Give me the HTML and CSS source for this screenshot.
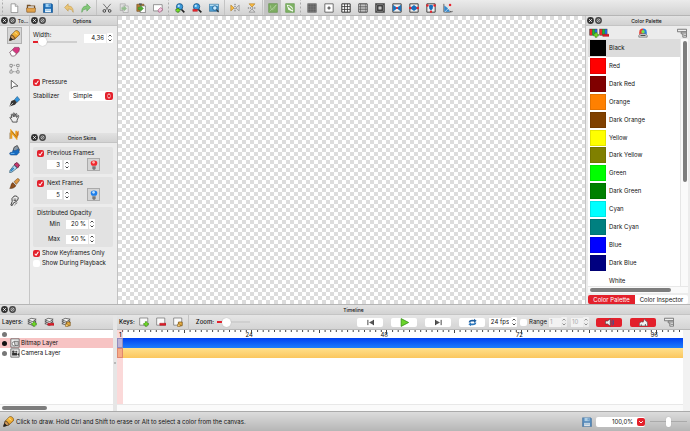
FILE: index.html
```html
<!DOCTYPE html>
<html lang="en">
<head>
<meta charset="utf-8">
<title>Animation editor</title>
<link rel="stylesheet" href="styles.css">
</head>
<body>
<svg class="defs" aria-hidden="true">
  <defs>
    <linearGradient id="g-pencil" x1="0" y1="0" x2="1" y2="1"><stop offset="0" stop-color="#ffd257"/><stop offset="1" stop-color="#e08a10"/></linearGradient>
    <symbol id="i-close" viewBox="0 0 8 8"><circle cx="4" cy="4" r="3.9" fill="#333"/><path d="M2.500 2.500l3 3M5.500 2.500l-3 3" stroke="#fff" stroke-width="1"/></symbol>
    <symbol id="i-float" viewBox="0 0 8 8"><circle cx="4" cy="4" r="3.9" fill="#444"/><circle cx="4" cy="4" r="1.800" fill="none" stroke="#ddd" stroke-width=".8"/><path d="M2.500 5.500l3-3" stroke="#ddd" stroke-width=".8"/></symbol>
    <symbol id="i-new" viewBox="0 0 12 12"><path d="M2.500 1h5l3 3v7.500h-8z" fill="#fff" stroke="#777" stroke-width=".8"/><path d="M7.500 1v3h3" fill="#ddd" stroke="#777" stroke-width=".7"/></symbol>
    <symbol id="i-open" viewBox="0 0 12 12"><path d="M1 2h4l1 1h5v8H1z" fill="#765128"/><path d="M2.500 4h7v3h-7z" fill="#eee"/><path d="M.5 6h11L11 11H1z" fill="#e3a44b" stroke="#765128" stroke-width=".6"/></symbol>
    <symbol id="i-save" viewBox="0 0 12 12"><path d="M.5 1h10l1 1v9.500H.5z" fill="#1769b4" stroke="#0d4c88" stroke-width=".7"/><path d="M3 1h6v4H3z" fill="#9fd0f3"/><path d="M6.800 1.500h1.200v2.700H6.800z" fill="#1769b4"/><path d="M2.500 7h7v4h-7z" fill="#eef5fb"/><path d="M3 8.500h6" stroke="#57a3dc"/></symbol>
    <symbol id="i-undo" viewBox="0 0 12 12"><path d="M.7 5.300L5 1v2.600c4 0 6.300 2.200 6 7.600C10 8.300 8 7.200 5 7.200v2.600z" fill="#e9c577" stroke="#bd913f" stroke-width=".6"/></symbol>
    <symbol id="i-redo" viewBox="0 0 12 12"><path d="M11.300 5.300L7 1v2.600C3 3.600.7 5.800 1 11.200 2 8.300 4 7.200 7 7.200v2.600z" fill="#84c779" stroke="#4b9b48" stroke-width=".6"/></symbol>
    <symbol id="i-cut" viewBox="0 0 12 12"><path d="M1.500 1l6.300 7.500M10.500 1L4.200 8.500" stroke="#777" stroke-width="1.200"/><circle cx="2.800" cy="9.500" r="1.600" fill="none" stroke="#444" stroke-width="1.200"/><circle cx="9.200" cy="9.500" r="1.600" fill="none" stroke="#444" stroke-width="1.200"/></symbol>
    <symbol id="i-copy" viewBox="0 0 12 12"><g opacity=".65"><path d="M1.500 1h6v8h-6z" fill="#ddd" stroke="#777" stroke-width=".7"/><path d="M5 3.500h6V11.500H5z" fill="#eee" stroke="#777" stroke-width=".7"/><path d="M3 5h3V3l3.500 3.500L6 10V8H3z" fill="#71ad68"/></g></symbol>
    <symbol id="i-paste" viewBox="0 0 12 12"><path d="M1 1.500h8.500V10H1z" fill="#b78036" stroke="#6c4618" stroke-width=".7"/><path d="M3.500.5h3.500v2H3.500z" fill="#555"/><path d="M5 3.500h6.300v8H5z" fill="#fff" stroke="#555" stroke-width=".7"/><path d="M2.500 5h3V3L9 6.500 5.500 10V8h-3z" fill="#4eab32" stroke="#2a701d" stroke-width=".4"/></symbol>
    <symbol id="i-clear" viewBox="0 0 12 12"><path d="M.5 2h10.500v7.500H.5z" fill="#fff" stroke="#666" stroke-width=".8"/><path d="M6 8.500l3-3 2.700 2-3 3.500H7z" fill="#eec6dc" stroke="#a44373" stroke-width=".7"/></symbol>
    <symbol id="i-lens" viewBox="0 0 12 12"><path d="M7.500 7.500l3.700 3.700" stroke="#222" stroke-width="2"/><circle cx="5.500" cy="4.500" r="3.800" fill="#3c9bdc" stroke="#164c7c" stroke-width=".9"/><circle cx="4.500" cy="3.500" r="1.300" fill="#bce6ff"/></symbol>
    <symbol id="i-zin" viewBox="0 0 12 12"><use href="#i-lens"/><path d="M3.500 6v5.500M.7 8.700h5.600" stroke="#27650f" stroke-width="2.800"/><path d="M3.500 6.500v4.500M1.200 8.700h4.600" stroke="#74dc2b" stroke-width="1.600"/></symbol>
    <symbol id="i-zout" viewBox="0 0 12 12"><use href="#i-lens"/><path d="M1 7.500h5.500V10H1z" fill="#ed252d" stroke="#a50f18" stroke-width=".5"/></symbol>
    <symbol id="i-zfit" viewBox="0 0 12 12"><path d="M.5 1.500h11v8.500H.5z" fill="#4e9fd3" stroke="#2d688f" stroke-width=".7"/><path d="M1 2h10v1.500H1z" fill="#bce1f5"/><circle cx="7" cy="6" r="2.700" fill="#c7eaff" stroke="#16588b"/><path d="M9 8l2.500 3" stroke="#333" stroke-width="1.500"/></symbol>
    <symbol id="i-fliph" viewBox="0 0 12 12"><path d="M6 1v10" stroke="#555" stroke-dasharray="1.500 1"/><path d="M1 2.500L4.800 6 1 9.500z" fill="#ffc247" stroke="#a87214" stroke-width=".7"/><path d="M11 2.500L7.200 6 11 9.500z" fill="#ddd" stroke="#777" stroke-width=".7"/></symbol>
    <symbol id="i-flipv" viewBox="0 0 12 12"><path d="M1 6h10" stroke="#555" stroke-dasharray="1.500 1"/><path d="M2.500 1h7L6 4.800z" fill="#ffc247" stroke="#a87214" stroke-width=".7"/><path d="M2.500 11h7L6 7.200z" fill="#ddd" stroke="#777" stroke-width=".7"/></symbol>
    <symbol id="i-green1" viewBox="0 0 12 12"><path d="M.8.8h10.400v10.400H.8z" fill="#7eae62" stroke="#65924d" stroke-width=".8"/><path d="M3 3c0 3 1 5 2.500 5S8 5 10 2.500M2 10l8-8" stroke="#bcd7ad" fill="none" stroke-width=".7"/></symbol>
    <symbol id="i-green2" viewBox="0 0 12 12"><path d="M.8.8h10.400v10.400H.8z" fill="#7fb364" stroke="#679951" stroke-width=".8"/><path d="M2 2l2 6 5.500 2.500c1-5-1-7.500-7.500-8.500z" fill="#f4f8f1"/><path d="M4 3.500l5 4.500" stroke="#7fb364" stroke-width="1.500"/></symbol>
    <symbol id="i-dots" viewBox="0 0 12 12"><path d="M.5.500h11v11H.5z" fill="#555"/><path d="M2 1v10M4 1v10M6 1v10M8 1v10M10 1v10M1 2h10M1 4h10M1 6h10M1 8h10M1 10h10" stroke="#999" stroke-width=".4"/></symbol>
    <symbol id="i-plus" viewBox="0 0 12 12"><path d="M1 1h10v10H1z" fill="#fff" stroke="#555" stroke-width="1"/><path d="M6 4v4M4 6h4" stroke="#222" stroke-width="1"/></symbol>
    <symbol id="i-thirds" viewBox="0 0 12 12"><path d="M1 1h10v10H1z" fill="#fff" stroke="#333" stroke-width="1.200"/><path d="M4.300 1v10M7.700 1v10M1 4.300h10M1 7.700h10" stroke="#333" stroke-width="1"/></symbol>
    <symbol id="i-golden" viewBox="0 0 12 12"><path d="M1 1h10v10H1z" fill="#fff" stroke="#444" stroke-width="1.200"/><path d="M4.800 1v10M7.200 1v10M3 1v10M9.200 1v10M1 4.500h10M1 7.500h10" stroke="#444" stroke-width=".8"/></symbol>
    <symbol id="i-safe" viewBox="0 0 12 12"><path d="M1 1h10v10H1z" fill="#999" stroke="#444" stroke-width="1.500"/><path d="M3 3h6v6H3z" fill="#888" stroke="#333"/><path d="M5 5h2v2H5z" fill="#fff"/><path d="M1 1l4 4M11 1L7 5M1 11l4-4M11 11L7 7" stroke="#444" stroke-width=".7"/></symbol>
    <symbol id="i-p1" viewBox="0 0 12 12"><path d="M1 1h10v10H1z" fill="#eee" stroke="#444" stroke-width="1.200"/><path d="M1.500 3L6 6 1.500 9.500zM10.500 3L6 6l4.500 3.500z" fill="#156dbd" stroke="#156dbd"/><circle cx="6" cy="6" r="1.300" fill="#e6242e"/></symbol>
    <symbol id="i-p2" viewBox="0 0 12 12"><path d="M1 1h10v10H1z" fill="#eee" stroke="#444" stroke-width="1.200"/><path d="M1 6l5-3.500L11 6 6 9.500z" fill="#156dbd"/><circle cx="1.500" cy="6" r="1.500" fill="#e6242e"/><circle cx="10.500" cy="6" r="1.500" fill="#e6242e"/></symbol>
    <symbol id="i-p3" viewBox="0 0 12 12"><path d="M1 1h10v10H1z" fill="#eee" stroke="#444" stroke-width="1.200"/><path d="M3.500 3L6 2l2.500 1L8 7 6 9 4 7z" fill="#156dbd"/><circle cx="1.700" cy="3" r="1.500" fill="#e6242e"/><circle cx="10.300" cy="3" r="1.500" fill="#e6242e"/><circle cx="6" cy="10.500" r="1.400" fill="#e6242e"/></symbol>
    <symbol id="i-p4" viewBox="0 0 12 12"><path d="M1 1v10h8" fill="none" stroke="#555"/><path d="M1.500 3l4 3 3 4.500h-7z" fill="#3388cd"/><path d="M2 11l7-7" stroke="#fff" stroke-width=".7"/><circle cx="8.500" cy="2.500" r="1.500" fill="#e6242e"/><path d="M8.500 9.500l1.500 1.500 1.500-1.500" fill="none" stroke="#222" stroke-width=".9"/></symbol>
    <symbol id="i-pencil" viewBox="0 0 12 12"><path d="M.8 11.200L2.400 5.500 7 .8c2.300-1.200 5.500 2 4.400 4.400L6.500 9.700z" fill="url(#g-pencil)" stroke="#5c3d13" stroke-width=".6"/><path d="M.8 11.200L2.400 5.500 4.500 6l.2 1.500 1.600.4.200 1.800z" fill="#d69d5d" stroke="#3b2b19" stroke-width=".7"/><path d="M.3 11.700L1.700 7.500l3 3z" fill="#242424"/><path d="M6.500 2.500L9 5" stroke="#fff0a4" stroke-width="1"/></symbol>
    <symbol id="i-eraser" viewBox="0 0 12 12"><path d="M1 7L6 1.500h4.800l.7 1.500-.7 3L6 10.800H2.800z" fill="#d6357f" stroke="#742048" stroke-width=".6"/><path d="M1 7L3.500 4.300 8 8.500 6 10.800H2.800z" fill="#fff" stroke="#666" stroke-width=".6"/></symbol>
    <symbol id="i-select" viewBox="0 0 12 12"><path d="M2.500 2.500h7v7h-7z" fill="none" stroke="#888" stroke-dasharray="1.500 1"/><g fill="#fff" stroke="#777" stroke-width=".8"><path d="M1 1.500h2.500V4H1zM8.500 1.500H11V4H8.500zM1 8.500h2.500V11H1zM8.500 8.500H11V11H8.500z"/></g></symbol>
    <symbol id="i-move" viewBox="0 0 12 12"><path d="M2.500 1.500v9l2.800-2.400 4.500-.4z" fill="#fff" stroke="#444" stroke-width=".9"/></symbol>
    <symbol id="i-pen" viewBox="0 0 12 12"><path d="M6 4l3-3.500L11.800 4 8.500 7z" fill="#3595db" stroke="#155282" stroke-width=".6"/><path d="M.5 11.500l2-6L6 4l2.500 3L6.500 9.500z" fill="#343434"/><path d="M1 11l3.500-3.500" stroke="#ddd" stroke-width=".8"/></symbol>
    <symbol id="i-hand" viewBox="0 0 12 12"><path d="M3 9L.9 6.200c.3-1 1.300-.6 2.100.2L2.500 2.700c.4-.9 1.300-.6 1.500.2l.8 2.300-.2-3.800c.5-.8 1.400-.5 1.500.3l.3 3.500.9-3.200c.5-.7 1.300-.4 1.300.4l-.3 3.500 1.400-2c.7-.4 1.200.2.900.9L8.800 9v2H3.800z" fill="#eee" stroke="#3c3c3c" stroke-width=".9"/></symbol>
    <symbol id="i-poly" viewBox="0 0 12 12"><path d="M2.500 10.500v-8l5.500 7V2" fill="none" stroke="#ed9f1b" stroke-width="2.200"/><path d="M3 2.500l6 7M1 11V4" stroke="#734b12" stroke-width=".6"/><path d="M8.500 9.500V4l2-2.500v5z" fill="#cf741a"/></symbol>
    <symbol id="i-bucket" viewBox="0 0 12 12"><path d="M5.500 2.500L9 .5l2.500 5L8 9 4.500 6z" fill="#8d99a5" stroke="#333" stroke-width=".8"/><path d="M4.500 5.500c2 1.500 4.500 0 5.500-1.500l1.300 4L8.500 11H2C-.2 10 .3 7.500 3.500 8z" fill="#176bc0" stroke="#114580" stroke-width=".5"/><path d="M2 9.300h4" stroke="#63b2f2"/></symbol>
    <symbol id="i-drop" viewBox="0 0 12 12"><path d="M5.500 2.800L8.500.5l3 2.800L9.500 6.500z" fill="#c7376d" stroke="#69213e" stroke-width="1"/><path d="M5.500 3.500l3.200 3.100L3.200 11 .7 11.500 1.200 9z" fill="#b9dcf2" stroke="#26526c" stroke-width=".8"/><path d="M2 9.800l3.200-3.200" stroke="#297fc1" stroke-width="1.700"/></symbol>
    <symbol id="i-brush" viewBox="0 0 12 12"><path d="M5.500 4l3.500-3.200c1-.8 3 1 2.200 2.200L8 7z" fill="#de9842" stroke="#674115" stroke-width=".6"/><path d="M5 4.500l3 3-1 1-3-3z" fill="#ccc"/><path d="M4 5l3.500 3.500C6 11 3 11.700.8 11.300 2.500 10 1.500 7 4 5z" fill="#90501e" stroke="#4f2a0c" stroke-width=".6"/></symbol>
    <symbol id="i-smudge" viewBox="0 0 12 12"><path d="M5.500 1.200C8 .5 10.500 2 10 4.300L8.200 7 5 8.500 3.500 11.500 2 11l1.500-4-.3-3z" fill="#eee" stroke="#333" stroke-width="1"/><path d="M5 4.500h3M5 6h3M7 9.500l2-1M6 11l1-.5" stroke="#333" stroke-width=".8"/></symbol>
    <symbol id="i-bulb-r" viewBox="0 0 12 12"><path d="M6 .5c5 0 4.600 4 2.500 6.500h-5C1.400 4.500 1 .5 6 .5z" fill="#f1282d"/><circle cx="5.500" cy="2.800" r="1.600" fill="#ffb5ae"/><path d="M4 7.500h4v3L7 11.800H5l-1-1.300z" fill="#777"/></symbol>
    <symbol id="i-bulb-b" viewBox="0 0 12 12"><path d="M6 .5c5 0 4.600 4 2.500 6.500h-5C1.400 4.500 1 .5 6 .5z" fill="#1d7eea"/><circle cx="5.500" cy="2.800" r="1.600" fill="#bde1ff"/><path d="M4 7.500h4v3L7 11.800H5l-1-1.300z" fill="#777"/></symbol>
    <symbol id="i-rgb" viewBox="0 0 12 12"><path d="M.5 1h9.500v8H.5z" fill="#333"/><path d="M1 1.500h3v7H1z" fill="#e82828"/><path d="M4 1.500h3v7H4z" fill="#21b530"/><path d="M7 1.500h2.600v7H7z" fill="#2465dc"/></symbol>
    <symbol id="i-add" viewBox="0 0 12 12"><path d="M8.500 5.500v6M5.500 8.500h6" stroke="#27650f" stroke-width="2.800"/><path d="M8.500 5.800v5.400M5.800 8.500h5.400" stroke="#74dc2b" stroke-width="1.800"/></symbol>
    <symbol id="i-del" viewBox="0 0 12 12"><path d="M4.500 7.500H12V10H4.500z" fill="#e21e29" stroke="#9b0d15" stroke-width=".5"/></symbol>
    <symbol id="i-dup" viewBox="0 0 12 12"><path d="M6.500 6H11v4.500H6.500z" fill="#f0b545" stroke="#765014" stroke-width=".9"/><path d="M5.500 8.500h3v3h-3z" fill="#ffd376" stroke="#765014" stroke-width=".6"/></symbol>
    <symbol id="i-wheel" viewBox="0 0 12 12"><path d="M6 .5A4.500 4.500 0 0 0 1.500 5v3H6z" fill="#e83b31"/><path d="M6 .5A4.500 4.500 0 0 1 10.500 5v3H6z" fill="#287ede"/><circle cx="6" cy="4.500" r="2" fill="#7be34a"/><path d="M1 9l2-2h6l2 2v2H1z" fill="#d9d9d9" stroke="#555" stroke-width=".7"/><path d="M3 9h6" stroke="#333"/></symbol>
    <symbol id="i-menu" viewBox="0 0 12 12"><path d="M.5 1.500h11v3H.5z" fill="#eee" stroke="#666" stroke-width="1"/><path d="M5 5h6.500v6H7V7H5z" fill="#eee" stroke="#666" stroke-width="1"/><path d="M7 7h4M8 9h3" stroke="#666" stroke-width=".8"/></symbol>
    <symbol id="i-layers" viewBox="0 0 12 12"><g fill="#f5f5f5" stroke="#333" stroke-width=".8"><path d="M1 8l4-2 6 1-4 3z"/><path d="M1 5.800l4-2 6 1-4 3z"/><path d="M1 3.600l4-2 6 1-4 3z"/></g></symbol>
    <symbol id="i-frame" viewBox="0 0 12 12"><path d="M.8 1.200h9.700v8.600H.8z" fill="#fafafa" stroke="#666" stroke-width=".8"/></symbol>
    <symbol id="i-bitmap" viewBox="0 0 12 12"><path d="M1 1h10v10H1z" fill="#eee" stroke="#555" stroke-width=".9"/><circle cx="5" cy="7" r="2.500" fill="#fff" stroke="#555" stroke-width=".8"/><path d="M5 4h5v5H6z" fill="#ccc" stroke="#555" stroke-width=".8"/></symbol>
    <symbol id="i-camera" viewBox="0 0 12 12"><path d="M1 1h10v10H1z" fill="#eee" stroke="#555" stroke-width=".9"/><circle cx="4" cy="4.500" r="1.600" fill="#444"/><circle cx="7.500" cy="4.500" r="1.300" fill="#555"/><path d="M2.500 6h6v3h-6zM8.500 7.500L11 6v3.500z" fill="#333"/></symbol>
    <symbol id="i-first" viewBox="0 0 12 12"><path d="M2.500 2.500v7M10 2.500v7" stroke="#333" stroke-width="1.200"/><path d="M9.500 3L4 6l5.500 3z" fill="#555"/></symbol>
    <symbol id="i-last" viewBox="0 0 12 12"><path d="M9.500 2.500v7M2 2.500v7" stroke="#333" stroke-width="1.200"/><path d="M2.500 3L8 6 2.500 9z" fill="#555"/></symbol>
    <symbol id="i-play" viewBox="0 0 12 12"><path d="M1.500.8L11.500 6l-10 5.200z" fill="#6ad42b" stroke="#2f8b13" stroke-width="1"/></symbol>
    <symbol id="i-loop" viewBox="0 0 12 12"><path d="M1 6c0-3 2-4 7-3.500V1l3.500 2.800L8 6.500V4.800C5 4.500 3 4.500 3 6z" fill="#1c5d9f"/><path d="M11 6c0 3-2 4-7 3.500V11L.5 8.200 4 5.500v1.700c3 .3 5 .3 5-1.200z" fill="#2b77bd"/></symbol>
    <symbol id="i-sound" viewBox="0 0 12 12"><path d="M.5 4h3L7 1v10L3.500 8h-3z" fill="#eee" stroke="#333" stroke-width=".8"/><path d="M8.500 3.500c1.500 1.500 1.500 3.500 0 5M10 2c2.200 2.500 2.200 5.500 0 8" fill="none" stroke="#275b9a" stroke-width="1.200"/></symbol>
    <symbol id="i-scrub" viewBox="0 0 12 12"><path d="M.5 10.500V6.500L3.500 5l2 .5L7.500 1l1.500 3 2 1 .5 5.500z" fill="#f2f2f2" stroke="#555" stroke-width=".8"/><path d="M3 10.500V8.500M8.500 10.500V8" stroke="#333"/></symbol>
    <symbol id="i-step" viewBox="0 0 6 10"><path d="M1 0h4q1 0 1 1v8q0 1-1 1H1q-1 0-1-1V1q0-1 1-1z" fill="#fff"/><path d="M1.500 3.500L3 2l1.500 1.500M1.500 6.500L3 8l1.500-1.500" fill="none" stroke="#333" stroke-width=".9"/></symbol>
    <symbol id="i-updown" viewBox="0 0 8 8"><rect width="8" height="8" rx="2" fill="#e3202b"/><path d="M2.300 3.300L4 1.700l1.700 1.600M2.300 4.700L4 6.300l1.700-1.600" fill="none" stroke="#fff" stroke-width=".9"/></symbol>
    <symbol id="i-down" viewBox="0 0 8 8"><rect width="8" height="8" rx="2" fill="#e3202b"/><path d="M2.200 3.200L4 5l1.800-1.800" fill="none" stroke="#fff" stroke-width="1"/></symbol>
    <pattern id="ruler-ticks" width="135" height="8" patternUnits="userSpaceOnUse">
      <path d="M5.600 0v2M11.200 0v2M16.800 0v2M22.500 0v2M28.100 0v2M33.700 0v2M39.300 0v2M45 0v2M50.600 0v2M56.200 0v2M61.800 0v2M67.500 0v3M73.100 0v2M78.700 0v2M84.300 0v2M90 0v2M95.600 0v2M101.200 0v2M106.800 0v2M112.500 0v2M118.100 0v2M123.700 0v2M129.300 0v2M134.500 0v4" stroke="#444" stroke-width="1"/>
    </pattern>
  </defs>
</svg>

<header class="toolbar">
  <span class="grip"></span>
  <button class="tb" aria-label="New"><svg><use href="#i-new"/></svg></button>
  <button class="tb" aria-label="Open"><svg><use href="#i-open"/></svg></button>
  <button class="tb" aria-label="Save"><svg><use href="#i-save"/></svg></button>
  <span class="sep"></span>
  <button class="tb" aria-label="Undo"><svg><use href="#i-undo"/></svg></button>
  <button class="tb" aria-label="Redo"><svg><use href="#i-redo"/></svg></button>
  <span class="sep"></span>
  <button class="tb" aria-label="Cut"><svg><use href="#i-cut"/></svg></button>
  <button class="tb" aria-label="Copy"><svg><use href="#i-copy"/></svg></button>
  <button class="tb" aria-label="Paste"><svg><use href="#i-paste"/></svg></button>
  <button class="tb" aria-label="Clear frame"><svg><use href="#i-clear"/></svg></button>
  <span class="grip"></span>
  <button class="tb" aria-label="Zoom in"><svg><use href="#i-zin"/></svg></button>
  <button class="tb" aria-label="Zoom out"><svg><use href="#i-zout"/></svg></button>
  <button class="tb" aria-label="Reset view"><svg><use href="#i-zfit"/></svg></button>
  <span class="sep"></span>
  <button class="tb" aria-label="Flip horizontally"><svg><use href="#i-fliph"/></svg></button>
  <button class="tb" aria-label="Flip vertically"><svg><use href="#i-flipv"/></svg></button>
  <span class="sep"></span>
  <button class="tb on" aria-label="Thin lines"><svg><use href="#i-green1"/></svg></button>
  <button class="tb" aria-label="Outlines"><svg><use href="#i-green2"/></svg></button>
  <span class="grip"></span>
  <button class="tb" aria-label="Grid"><svg><use href="#i-dots"/></svg></button>
  <button class="tb" aria-label="Center"><svg><use href="#i-plus"/></svg></button>
  <button class="tb" aria-label="Thirds"><svg><use href="#i-thirds"/></svg></button>
  <button class="tb" aria-label="Golden ratio"><svg><use href="#i-golden"/></svg></button>
  <button class="tb" aria-label="Safe areas"><svg><use href="#i-safe"/></svg></button>
  <button class="tb" aria-label="One point perspective"><svg><use href="#i-p1"/></svg></button>
  <button class="tb" aria-label="Two point perspective"><svg><use href="#i-p2"/></svg></button>
  <button class="tb" aria-label="Three point perspective"><svg><use href="#i-p3"/></svg></button>
  <button class="tb" aria-label="Perspective angle"><svg><use href="#i-p4"/></svg></button>
</header>

<main class="workspace">
  <section class="dock tools">
    <div class="title"><button aria-label="Close"><svg><use href="#i-close"/></svg></button><button aria-label="Float"><svg><use href="#i-float"/></svg></button><h2>To...</h2></div>
    <nav class="tool-list">
      <button class="on" aria-label="Pencil"><svg><use href="#i-pencil"/></svg></button>
      <button aria-label="Eraser"><svg><use href="#i-eraser"/></svg></button>
      <button aria-label="Select"><svg><use href="#i-select"/></svg></button>
      <button aria-label="Move"><svg><use href="#i-move"/></svg></button>
      <button aria-label="Pen"><svg><use href="#i-pen"/></svg></button>
      <button aria-label="Hand"><svg><use href="#i-hand"/></svg></button>
      <button aria-label="Polyline"><svg><use href="#i-poly"/></svg></button>
      <button aria-label="Bucket"><svg><use href="#i-bucket"/></svg></button>
      <button aria-label="Eyedropper"><svg><use href="#i-drop"/></svg></button>
      <button aria-label="Brush"><svg><use href="#i-brush"/></svg></button>
      <button aria-label="Smudge"><svg><use href="#i-smudge"/></svg></button>
    </nav>
  </section>

  <div class="side">
    <section class="dock options">
      <div class="title"><button aria-label="Close"><svg><use href="#i-close"/></svg></button><button aria-label="Float"><svg><use href="#i-float"/></svg></button><h2>Options</h2></div>
      <div class="options-body">
        <div class="width-row">
          <div class="width-slider"><label for="width">Width:</label><input class="slider" id="width" type="range" min="0" max="100" value="14"></div>
          <input class="field wide" type="text" value="4,36" aria-label="Width value"><svg class="step"><use href="#i-step"/></svg>
        </div>
        <label class="check"><input type="checkbox" checked>Pressure</label>
        <div class="stab-row">
          <label for="stab">Stabilizer</label>
          <span class="select"><select id="stab"><option>Simple</option></select><svg><use href="#i-updown"/></svg></span>
        </div>
      </div>
    </section>
    <section class="dock onion">
      <div class="title"><button aria-label="Close"><svg><use href="#i-close"/></svg></button><button aria-label="Float"><svg><use href="#i-float"/></svg></button><h2>Onion Skins</h2></div>
      <div class="onion-body">
        <div class="group">
          <label class="check"><input type="checkbox" checked>Previous Frames</label>
          <div class="count"><input class="field" type="text" value="3" aria-label="Previous frame count"><svg class="step"><use href="#i-step"/></svg><button class="bulb" aria-label="Red tint"><svg><use href="#i-bulb-r"/></svg></button></div>
        </div>
        <div class="group">
          <label class="check"><input type="checkbox" checked>Next Frames</label>
          <div class="count"><input class="field" type="text" value="5" aria-label="Next frame count"><svg class="step"><use href="#i-step"/></svg><button class="bulb" aria-label="Blue tint"><svg><use href="#i-bulb-b"/></svg></button></div>
        </div>
        <div class="group opacity">
          <h3>Distributed Opacity</h3>
          <div class="opacity-row"><label for="min">Min</label><input class="field wide" id="min" type="text" value="20 %"><svg class="step"><use href="#i-step"/></svg></div>
          <div class="opacity-row"><label for="max">Max</label><input class="field wide" id="max" type="text" value="50 %"><svg class="step"><use href="#i-step"/></svg></div>
        </div>
        <label class="check"><input type="checkbox" checked>Show Keyframes Only</label>
        <label class="check"><input type="checkbox">Show During Playback</label>
      </div>
    </section>
  </div>

  <div class="canvas"></div>

  <section class="dock palette">
    <div class="title"><button aria-label="Close"><svg><use href="#i-close"/></svg></button><button aria-label="Float"><svg><use href="#i-float"/></svg></button><h2>Color Palette</h2></div>
    <div class="palette-tools">
      <button aria-label="Add color"><svg><use href="#i-rgb"/><use href="#i-add"/></svg></button>
      <button aria-label="Remove color"><svg><use href="#i-rgb"/><use href="#i-del"/></svg></button>
      <button class="wheel" aria-label="Color dialog"><svg><use href="#i-wheel"/></svg></button>
      <button aria-label="Palette menu"><svg><use href="#i-menu"/></svg></button>
    </div>
    <div class="swatches">
      <ul>
        <li class="selected"><i class="black"></i>Black</li>
        <li><i class="red"></i>Red</li>
        <li><i class="dark-red"></i>Dark Red</li>
        <li><i class="orange"></i>Orange</li>
        <li><i class="dark-orange"></i>Dark Orange</li>
        <li><i class="yellow"></i>Yellow</li>
        <li><i class="dark-yellow"></i>Dark Yellow</li>
        <li><i class="green"></i>Green</li>
        <li><i class="dark-green"></i>Dark Green</li>
        <li><i class="cyan"></i>Cyan</li>
        <li><i class="dark-cyan"></i>Dark Cyan</li>
        <li><i class="blue"></i>Blue</li>
        <li><i class="dark-blue"></i>Dark Blue</li>
        <li><i class="white"></i>White</li>
      </ul>
      <div class="vbar"><span></span></div>
      <div class="hbar"><span></span></div>
    </div>
    <div class="tabs"><button class="on">Color Palette</button><button>Color Inspector</button></div>
  </section>
</main>

<section class="dock timeline">
  <div class="title"><button aria-label="Close"><svg><use href="#i-close"/></svg></button><button aria-label="Float"><svg><use href="#i-float"/></svg></button><h2>Timeline</h2></div>
  <div class="timeline-body">
    <div class="layers">
      <div class="bar">
        <span class="bar-label">Layers:</span>
        <button class="tb" aria-label="Add layer"><svg><use href="#i-layers"/><use href="#i-add"/></svg></button>
        <button class="tb" aria-label="Remove layer"><svg><use href="#i-layers"/><use href="#i-del"/></svg></button>
        <button class="tb" aria-label="Duplicate layer"><svg><use href="#i-layers"/><use href="#i-dup"/></svg></button>
      </div>
      <div class="layer head"><i class="dot"></i></div>
      <div class="layer current"><i class="dot"></i><svg><use href="#i-bitmap"/></svg>Bitmap Layer</div>
      <div class="layer"><i class="dot"></i><svg><use href="#i-camera"/></svg>Camera Layer</div>
      <div class="hbar"><span></span></div>
    </div>
    <div class="splitter"><i></i></div>
    <div class="frames">
      <div class="bar">
        <span class="bar-label">Keys:</span>
        <button class="tb" aria-label="Add key"><svg><use href="#i-frame"/><use href="#i-add"/></svg></button>
        <button class="tb" aria-label="Remove key"><svg><use href="#i-frame"/><use href="#i-del"/></svg></button>
        <button class="tb" aria-label="Duplicate key"><svg><use href="#i-frame"/><use href="#i-dup"/></svg></button>
        <span class="sep"></span>
        <label class="bar-label zoom-label" for="tzoom">Zoom:</label>
        <input class="slider small" id="tzoom" type="range" min="0" max="100" value="22">
        <div class="transport">
          <button aria-label="First frame"><svg><use href="#i-first"/></svg></button>
          <button aria-label="Play"><svg><use href="#i-play"/></svg></button>
          <button aria-label="Last frame"><svg><use href="#i-last"/></svg></button>
          <button aria-label="Loop"><svg><use href="#i-loop"/></svg></button>
        </div>
        <input class="field wide" type="text" value="24 fps" aria-label="Frame rate"><svg class="step"><use href="#i-step"/></svg>
        <label class="check range"><input type="checkbox">Range</label>
        <input class="field mini" type="text" value="1" disabled aria-label="Range start"><svg class="step dim"><use href="#i-step"/></svg>
        <input class="field mini" type="text" value="10" disabled aria-label="Range end"><svg class="step dim"><use href="#i-step"/></svg>
        <div class="transport toggles">
          <button class="on" aria-label="Sound"><svg><use href="#i-sound"/></svg></button>
          <button class="on" aria-label="Sound scrub"><svg><use href="#i-scrub"/></svg></button>
        </div>
        <button class="tb" aria-label="Timeline menu"><svg><use href="#i-menu"/></svg></button>
      </div>
      <div class="tracks">
        <div class="ruler">
          <svg class="ticks"><rect width="100%" height="8" fill="url(#ruler-ticks)"/></svg>
          <b>1</b><span>24</span><span>48</span><span>72</span><span>96</span>
        </div>
        <div class="track bitmap"><i></i></div>
        <div class="track camera"><i></i></div>
        <div class="playhead"></div>
        <div class="hbar"></div>
      </div>
    </div>
  </div>
</section>

<footer class="status">
  <svg><use href="#i-pencil"/></svg>
  <p>Click to draw. Hold Ctrl and Shift to erase or Alt to select a color from the canvas.</p>
  <svg class="saved"><use href="#i-save"/></svg>
  <span class="select zoom"><select aria-label="Zoom level"><option>100,0%</option></select><svg><use href="#i-down"/></svg></span>
  <input class="slider plain" type="range" min="0" max="100" value="50" aria-label="Zoom">
</footer>
</body>
</html>
```
FILE: styles.css
```css
* { box-sizing: border-box; }
html, body { height: 100%; }
body {
  margin: 0;
  display: flex;
  flex-direction: column;
  overflow: hidden;
  background: #ececec;
  color: #111;
  font: 6px/10px Inter, "Liberation Sans", sans-serif;
}
button, input, select { font: inherit; color: inherit; margin: 0; padding: 0; border: 0; }
button { display: flex; align-items: center; justify-content: center; background: none; }
svg { display: block; width: 11px; height: 11px; flex: none; }
h2, h3, p, ul { margin: 0; padding: 0; font: inherit; }
label { white-space: nowrap; }
.defs { position: absolute; width: 0; height: 0; }

.toolbar {
  flex: none;
  display: flex;
  height: 16px;
  background: linear-gradient(#ebebeb, #d2d2d2);
  border-bottom: 1px solid #b5b5b5;
}
.tb { width: 17px; height: 15px; flex: none; }
.tb svg { width: 10px; height: 10px; }
.tb.on { background: #c3c3c3; }
.sep { width: 4px; flex: none; background: linear-gradient(#c4c4c4, #c4c4c4) center / 1px 100% no-repeat; }
.grip { width: 5px; flex: none; background: radial-gradient(circle, #aaa 1px, transparent 1px) center / 5px 4px repeat-y; }

.workspace { flex: 1; min-height: 0; display: flex; }
.title {
  flex: none;
  display: flex;
  align-items: center;
  gap: 1px;
  height: 10px;
  padding-left: 1px;
  background: linear-gradient(#e2e2e2, #d2d2d2);
  border-bottom: 1px solid #c4c4c4;
}
.title svg { width: 7px; height: 7px; }
.title h2 { flex: 1; text-align: center; font-size: 5px; font-weight: 500; }

.tools { width: 30px; display: flex; flex-direction: column; border-right: 1px solid #c6c6c6; }
.tool-list { height: 63%; margin-top: 1px; display: flex; flex-direction: column; align-items: center; }
.tool-list button { flex: 1; width: 15px; border: 1px solid transparent; }
.tool-list .on { background: #d6d6d6; border-color: #b0b0b0; }

.side { width: 88px; display: flex; flex-direction: column; border-right: 1px solid #c2c2c2; }
.options { height: 117px; }
.options-body { padding: 2px 4px 0 3px; }
.width-row { display: flex; align-items: center; gap: 1px; height: 20px; margin-bottom: 26px; }
.width-slider { flex: 1; padding-right: 6px; }
.width-slider label { display: block; height: 7px; }
.options .check { height: 16px; margin-bottom: 1px; }
.stab-row { display: flex; align-items: center; justify-content: space-between; }
.check { display: flex; align-items: center; gap: 2px; height: 10px; }
.check input {
  appearance: none;
  width: 7px;
  height: 7px;
  flex: none;
  border-radius: 2px;
  background: #fff;
}
.check input:checked {
  background: url("data:image/svg+xml,%3Csvg xmlns='http://www.w3.org/2000/svg' viewBox='0 0 8 8'%3E%3Cpath d='M2 4.300l1.500 1.700L6.200 2' fill='none' stroke='white' stroke-width='1.200'/%3E%3C/svg%3E") #e3202b;
}
.field { width: 15px; height: 9px; background: #fff; text-align: right; padding-right: 2px; min-width: 0; }
.field.wide { width: 22px; }
.field.mini { width: 12px; text-align: left; padding: 0 0 0 1px; }
.field:disabled { color: #aaa; background: #f2f2f2; }
.step { width: 6px; height: 10px; }
.step.dim { opacity: .5; }
.select { position: relative; display: block; width: 44px; height: 10px; }
.select select { appearance: none; width: 100%; height: 100%; background: #fff; border-radius: 2px; padding-left: 4px; }
.select svg { position: absolute; right: 0; top: 1px; width: 8px; height: 8px; pointer-events: none; }

.slider {
  appearance: none;
  display: block;
  width: 100%;
  height: 9px;
  background: linear-gradient(90deg, #e3202b 15%, #cfcfcf 15%) center / 100% 2px no-repeat;
}
.slider::-webkit-slider-thumb {
  appearance: none;
  width: 9px;
  height: 9px;
  border-radius: 50%;
  background: #fff;
  box-shadow: 0 0 1px #999;
}
.slider.small { width: 33px; flex: none; }
.slider.plain { width: 37px; background-image: linear-gradient(#aaa, #aaa); background-size: 100% 1px; height: 10px; }
.slider.plain::-webkit-slider-thumb { width: 5px; height: 10px; border-radius: 2px; }

.onion-body { padding: 4px 4px 0 3px; }
.group { padding: 1px 4px; margin-bottom: 3px; height: 27px; border-radius: 2px; background: #e2e2e2; }
.group .check { gap: 3px; }
.count { display: flex; align-items: center; gap: 2px; padding-left: 10px; }
.bulb { width: 13px; height: 13px; margin-left: 15px; background: #d4d4d4; border: 1px solid #aaa; }
.bulb svg { width: 10px; height: 10px; }
.group.opacity { height: 40px; margin-bottom: 1px; }
.opacity-row { display: grid; grid-template-columns: 28px 22px 6px; gap: 1px; height: 12px; margin-bottom: 3px; align-items: center; }
.opacity-row label { text-align: right; padding-right: 5px; }

.canvas {
  flex: 1;
  min-width: 0;
  background: repeating-conic-gradient(#fff 0 25%, #dcdcdc 0 50%) 0 0 / 8px 8px;
}

.palette { width: 105px; display: flex; flex-direction: column; border-left: 1px solid #c6c6c6; }
.palette-tools { display: flex; height: 13px; padding: 0 3px; align-items: center; }
.palette-tools svg { width: 10px; height: 10px; }
.palette-tools button { flex: none; width: 10px; }
.palette-tools .wheel { margin: 0 auto; }
.swatches { position: relative; flex: 1; min-height: 0; margin: 0 2px; background: #fff; overflow: hidden; }
.swatches ul { height: 100%; padding-bottom: 3px; display: flex; flex-direction: column; list-style: none; }
.swatches li { flex: 1; min-height: 0; display: flex; align-items: center; gap: 3px; padding-left: 2px; }
.swatches .selected { background: #dcdcdc; }
.swatches i { width: 16px; height: 16px; box-shadow: inset 0 0 0 1px rgba(0, 0, 0, .1); }
.black { background: #000; }
.red { background: #f00; }
.dark-red { background: #800000; }
.orange { background: #ff8000; }
.dark-orange { background: #804000; }
.yellow { background: #ff0; }
.dark-yellow { background: #808000; }
.green { background: #0f0; }
.dark-green { background: #008000; }
.cyan { background: #0ff; }
.dark-cyan { background: #008080; }
.blue { background: #00f; }
.dark-blue { background: #000080; }
.swatches .white { background: #fff; box-shadow: none; }
.vbar { position: absolute; top: 0; right: 0; bottom: 7px; width: 8px; padding: 2px; background: #fafafa; border-left: 1px solid #e6e6e6; }
.vbar span { display: block; width: 4px; height: 58%; border-radius: 2px; background: #7d7d7d; }
.hbar { position: absolute; left: 0; right: 0; bottom: 0; height: 7px; padding: 1px 2px; background: #fafafa; border-top: 1px solid #e8e8e8; }
.hbar span { display: block; width: 84%; height: 4px; border-radius: 2px; background: #7d7d7d; }
.tabs { display: flex; height: 11px; padding: 2px 2px 0; }
.tabs button { background: #fff; border-radius: 0 2px 2px 0; flex: 53; height: 9px; white-space: nowrap; }
.tabs .on { flex: 47; background: #e3202b; color: #fff; border-radius: 2px 0 0 2px; }

.timeline { flex: none; height: 107px; display: flex; flex-direction: column; border-top: 1px solid #b5b5b5; }
.timeline-body { flex: 1; min-height: 0; display: flex; }
.bar { display: flex; align-items: center; height: 15px; background: linear-gradient(#e6e6e6, #d4d4d4); border-bottom: 1px solid #b8b8b8; }
.bar-label { flex: none; padding: 0 1px 0 2px; font-weight: 500; }
.zoom-label { padding: 0 3px 0 5px; }
.layers { position: relative; width: 113px; background: #fff; }
.layer { display: flex; align-items: center; height: 10px; gap: 3px; padding-left: 2px; }
.layer.head { height: 8px; }
.layer svg { width: 10px; height: 10px; margin-right: -2px; }
.dot { width: 5px; height: 5px; border-radius: 50%; background: #777; }
.current { background: #f7c3c3; }
.current .dot { background: #111; }
.layers .hbar span { width: 41%; }
.splitter { width: 4px; display: flex; align-items: center; justify-content: center; background: #e6e6e6; }
.splitter i { width: 2px; height: 2px; border-radius: 50%; background: #aaa; }
.frames { flex: 1; min-width: 0; display: flex; flex-direction: column; }
.frames .sep { height: 15px; }
.transport { flex: none; display: flex; gap: 8px; margin: 0 4px 0 107px; }
.transport button { width: 26px; height: 9px; border-radius: 2px; background: #fff; }
.transport svg { width: 9px; height: 9px; }
.transport .on { background: #e3202b; }
.transport.toggles { margin: 0 4px; }
.range { margin: 0 1px 0 3px; }
.frames .field.mini { margin-left: 1px; }
.frames .dim { margin-right: 3px; }
.tracks { position: relative; flex: 1; background: #fff; margin-right: 7px; box-shadow: 7px 0 #f2f2f2; overflow: hidden; }
.ruler { position: relative; display: flex; height: 8px; padding-left: 1px; line-height: 10px; background: #fff; }
.ruler span { flex: none; width: 135px; text-align: right; }
.ruler b { position: absolute; left: 2px; font-weight: 500; z-index: 2; }
.ticks { position: absolute; inset: 0; width: 100%; height: 8px; }
.track { height: 10px; }
.bitmap { background: linear-gradient(#0040f0, #1e7dfb); }
.camera { background: linear-gradient(#ffe08c, #fbc75e); }
.track i { display: block; width: 6px; height: 10px; background: #a9cbf8; border: 1px solid #6c93d8; }
.camera i { background: #f9c08c; border-color: #d98e6c; }
.playhead { position: absolute; top: 0; bottom: 0; left: 0; width: 6px; background: rgba(240, 120, 120, .28); }

.status {
  flex: none;
  display: flex;
  align-items: center;
  gap: 2px;
  height: 20px;
  padding: 0 3px;
  background: linear-gradient(#dcdcdc, #b6b6b6);
  border-top: 1px solid #aaa;
}
.status p { flex: 1; white-space: nowrap; }
.status .saved { width: 10px; height: 10px; opacity: .65; margin-right: 2px; }
.select.zoom { width: 49px; margin-right: 3px; }
.zoom select { padding-left: 16px; }
```
